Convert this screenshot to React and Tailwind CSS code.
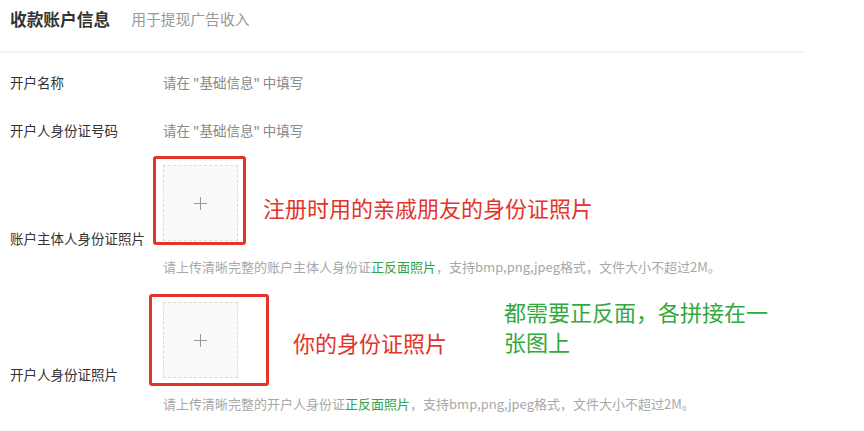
export default function App() {
  const font = { fontFamily: '"Noto Sans CJK SC", "Noto Sans", sans-serif' };
  const Upload = ({ children }) => (
    <div className="relative w-[75px] h-[76px] bg-[#fafafa] border border-dashed border-[#dcdcdc] flex items-center justify-center">
      <div className="relative w-[13px] h-[13px]">
        <div className="absolute left-0 top-[6px] w-[13px] h-px bg-[#999]" />
        <div className="absolute top-0 left-[6px] h-[13px] w-px bg-[#999]" />
      </div>
      {children}
    </div>
  );
  const Hint = ({ who }) => (
    <div className="text-[13px] leading-[18px] text-[#a8a8a8] whitespace-nowrap">
      请上传清晰完整的{who}身份证<span className="text-[#2fa24a]">正反面照片</span>，支持bmp,png,jpeg格式，文件大小不超过2M。
    </div>
  );
  return (
    <div className="w-[864px] h-[431px] bg-white overflow-hidden relative" style={font}>
      <div className="w-[805px] h-[53px] border-b-2 border-[#f3f3f3] flex items-start pt-[8px] pl-[10px]">
        <span className="text-[16.7px] leading-[22px] font-bold text-[#333]">收款账户信息</span>
        <span className="ml-[21px] text-[14.8px] leading-[22px] text-[#999]">用于提现广告收入</span>
      </div>

      <div className="flex mt-[19px] pl-[10px] text-[13.5px] leading-[20px]">
        <div className="w-[153px] text-[#333]">开户名称</div>
        <div className="text-[#888]">请在 "基础信息" 中填写</div>
      </div>
      <div className="flex mt-[28px] pl-[10px] text-[13.5px] leading-[20px]">
        <div className="w-[153px] text-[#333]">开户人身份证号码</div>
        <div className="text-[#888]">请在 "基础信息" 中填写</div>
      </div>

      <div className="flex items-end mt-[25px] pl-[10px]">
        <div className="w-[153px] text-[13.5px] leading-[20px] text-[#333] mb-[-7px]">账户主体人身份证照片</div>
        <Upload>
          <div className="absolute left-[-11px] top-[-10px] w-[93px] h-[89px] border-[3px] border-[#e3342b] rounded-[3px]" />
          <div className="absolute left-[99px] top-[27px] whitespace-nowrap text-[22px] leading-[28px] text-[#e3342b]">注册时用的亲戚朋友的身份证照片</div>
        </Upload>
      </div>
      <div className="pl-[163px] mt-[17px]"><Hint who="账户主体人" /></div>

      <div className="flex items-end mt-[26px] pl-[10px]">
        <div className="w-[153px] text-[13.5px] leading-[20px] text-[#333] mb-[-6px]">开户人身份证照片</div>
        <Upload>
          <div className="absolute left-[-15px] top-[-9px] w-[120px] h-[92px] border-[3px] border-[#e3342b] rounded-[3px]" />
          <div className="absolute left-[129px] top-[25px] whitespace-nowrap text-[22px] leading-[28px] text-[#e3342b]">你的身份证照片</div>
          <div className="absolute left-[340px] top-[-7px] w-[270px] text-[22px] leading-[30px] text-[#33a83c]">都需要正反面，各拼接在一<br />张图上</div>
        </Upload>
      </div>
      <div className="pl-[163px] mt-[17px]"><Hint who="开户人" /></div>
    </div>
  );
}
